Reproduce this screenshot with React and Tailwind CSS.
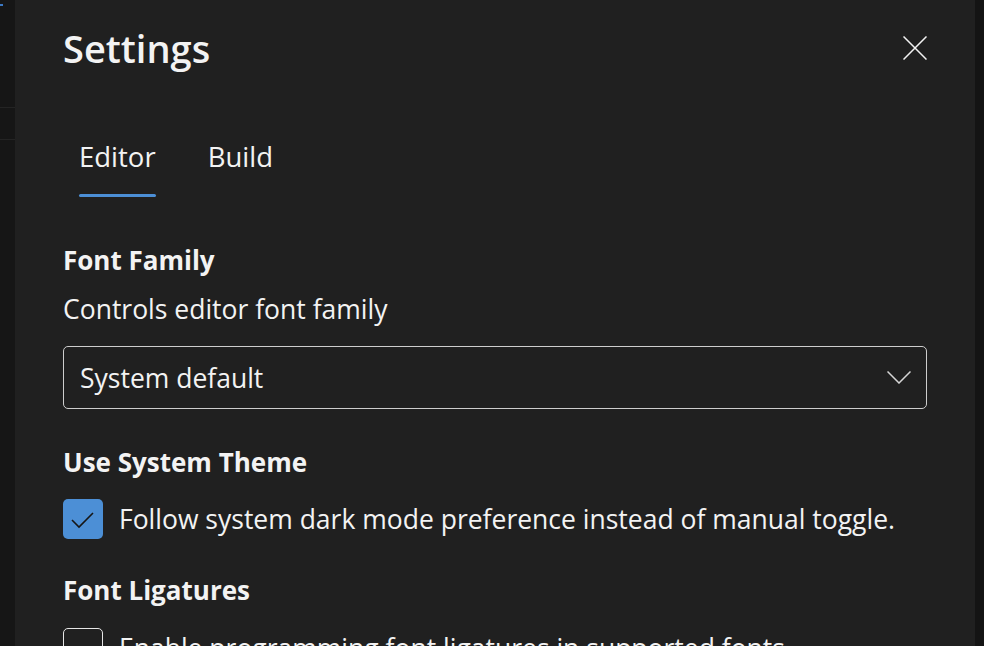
import React, { useState } from 'react';

const font = { fontFamily: '"Open Sans", "Noto Sans", sans-serif' };

const Checkbox = ({ checked, onChange }) => (
  <button
    type="button"
    onClick={onChange}
    className={`w-10 h-10 shrink-0 rounded-[5px] flex items-center justify-center ${
      checked ? 'bg-[#4c8fd6]' : 'border-[1.5px] border-[#e6e6e6]'
    }`}
  >
    {checked && (
      <svg width="40" height="40" viewBox="0 0 40 40" fill="none">
        <path d="M9 21l7 7L30 14" stroke="#161616" strokeWidth="1.6" />
      </svg>
    )}
  </button>
);

const App = () => {
  const [tab, setTab] = useState('Editor');
  const [systemTheme, setSystemTheme] = useState(true);
  const [ligatures, setLigatures] = useState(false);

  return (
    <div className="h-[646px] w-[984px] flex bg-[#161616] overflow-hidden text-[#f3f3f3]" style={font}>
      {/* background app peeking out on the left */}
      <div className="w-[15px] shrink-0 flex flex-col">
        <div className="h-[2px] w-[3px] mt-[4px] bg-[#3b78c4]" />
        <div className="h-px mt-[101px] bg-[#242424]" />
        <div className="h-px mt-[31px] bg-[#242424]" />
      </div>

      {/* Settings panel */}
      <div className="w-[960px] shrink-0 bg-[#202020] px-12">
        <div className="flex items-center justify-between pt-[22px]">
          <h1 className="text-[38px] leading-[52px] font-semibold">Settings</h1>
          <button type="button" className="w-6 h-6 flex items-center justify-center">
            <svg width="24" height="24" viewBox="0 0 24 24" fill="none">
              <path d="M0.5 0.5l23 23M23.5 0.5l-23 23" stroke="#f3f3f3" strokeWidth="1.5" />
            </svg>
          </button>
        </div>

        {/* Tabs */}
        <div className="flex gap-[20px] mt-[66px]">
          {['Editor', 'Build'].map((t) => (
            <button key={t} type="button" onClick={() => setTab(t)} className="flex flex-col px-4 text-left">
              <span className="text-[27.5px] leading-[34px]">{t}</span>
              <span className={`h-[3px] mt-[20px] rounded-full ${tab === t ? 'bg-[#4c8fd6]' : 'bg-transparent'}`} />
            </button>
          ))}
        </div>

        {/* Font Family */}
        <h2 className="text-[26px] leading-[34px] font-bold mt-[46px]">Font Family</h2>
        <p className="text-[26.5px] leading-[34px] mt-[15px]">Controls editor font family</p>
        <button
          type="button"
          className="mt-[20px] h-[63px] w-full rounded-[5px] border-[1.5px] border-[#cdcdcd] flex items-center justify-between pl-[16px] pr-[15px]"
        >
          <span className="text-[26.5px] leading-[34px]">System default</span>
          <svg width="24" height="13" viewBox="0 0 24 13" fill="none">
            <path d="M0.5 0.5L12 12L23.5 0.5" stroke="#d6d6d6" strokeWidth="1.5" />
          </svg>
        </button>

        {/* Use System Theme */}
        <h2 className="text-[26px] leading-[34px] font-bold mt-[36px]">Use System Theme</h2>
        <label className="flex items-center gap-4 mt-[20px]">
          <Checkbox checked={systemTheme} onChange={() => setSystemTheme(!systemTheme)} />
          <span className="text-[26.5px] leading-[34px]">Follow system dark mode preference instead of manual toggle.</span>
        </label>

        {/* Font Ligatures */}
        <h2 className="text-[26px] leading-[34px] font-bold mt-[34px]">Font Ligatures</h2>
        <label className="flex items-center gap-4 mt-[21px]">
          <Checkbox checked={ligatures} onChange={() => setLigatures(!ligatures)} />
          <span className="text-[26.5px] leading-[34px] whitespace-nowrap">Enable programming font ligatures in supported fonts.</span>
        </label>
      </div>

      <div className="flex-1 bg-[#141414]" />
    </div>
  );
};

export default App;
